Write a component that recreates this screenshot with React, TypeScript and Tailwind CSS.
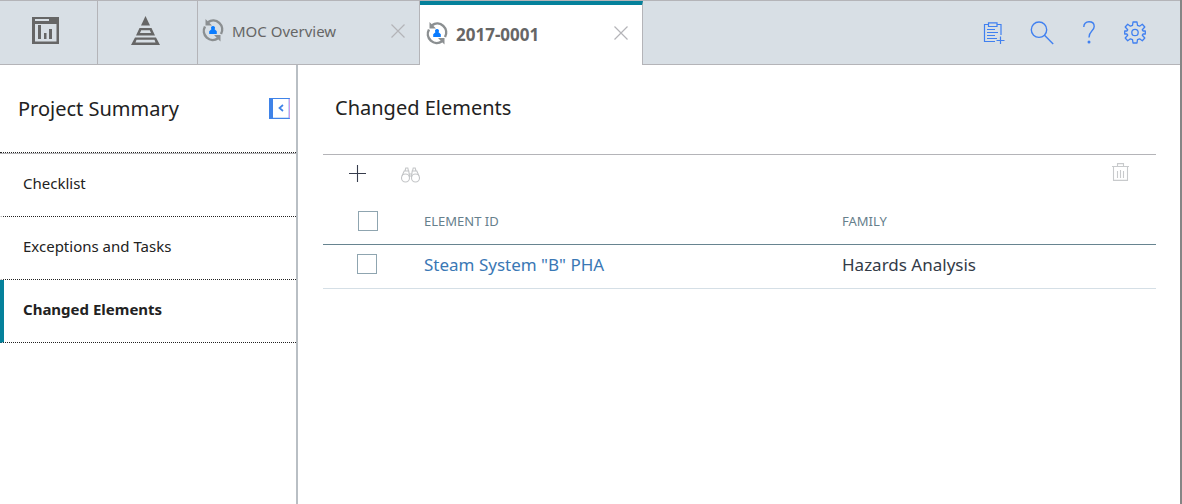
import type { ReactNode } from 'react';

const sections = [
  { label: 'Checklist', active: false },
  { label: 'Exceptions and Tasks', active: false },
  { label: 'Changed Elements', active: true }
];

const elements = [
  { id: 'Steam System "B" PHA', family: 'Hazards Analysis' }
];

function DashboardIcon() {
  return (
    <svg width="27" height="27" viewBox="0 0 27 27" fill="none" aria-hidden="true">
      <path fill="#666" fillRule="evenodd" d="M0 0H27V27H0ZM3 2V4H17V2ZM3 7V24.5H24.5V7Z" />
      <path fill="#666" d="M6 8H9V22H6ZM12 16H14.5V22H12ZM17 12H20V22H17Z" />
    </svg>
  );
}

function PyramidIcon() {
  return (
    <svg width="29" height="29" viewBox="0 0 29 29" aria-hidden="true">
      <path fill="#666" d="M14.5 0L19 9.5H10Z" />
      <path fill="#666" fillRule="evenodd" d="M8.5 12H20.5L24 19.5H5ZM10.2 14.2L9 17H20L18.8 14.2Z" />
      <path fill="#666" fillRule="evenodd" d="M4 21.5H25L29 29H0ZM5.5 23.7L4.5 26.5H24.5L23.5 23.7Z" />
    </svg>
  );
}

function MocIcon() {
  return (
    <svg width="22" height="24" viewBox="0 0 22 24" fill="none" aria-hidden="true">
      <path d="M6 4.2A9 9 0 0 1 19 16M16 20.3A9 9 0 0 1 3 8.5" stroke="#8b8f91" strokeWidth="2.5" />
      <path d="M3.5 1V7.5H10ZM18.5 23.5V17H12Z" fill="#8b8f91" />
      <path d="M11 8A2 2 0 0 1 12.6 11.2L14.8 13.2V16H7.2V13.2L9.4 11.2A2 2 0 0 1 11 8Z" fill="#0a7cff" />
    </svg>
  );
}

function CloseIcon() {
  return (
    <svg width="14" height="14" viewBox="0 0 14 14" fill="none" stroke="currentColor" strokeWidth="1.2" aria-hidden="true">
      <path d="M.5.5L13.5 13.5M13.5.5L.5 13.5" />
    </svg>
  );
}

function ClipboardIcon() {
  return (
    <svg width="22" height="22" viewBox="0 0 22 22" fill="none" stroke="currentColor" strokeWidth="1.2" aria-hidden="true">
      <path d="M5 2.5H1.5V19.5H12M14 2.5H18V13M5.5.8H14V4.5H5.5ZM4 7.5H12M4 10.5H15M4 13.5H12M4 16.5H14M17.5 14.5V22M13.5 18.5H21.5" />
    </svg>
  );
}

function SearchIcon() {
  return (
    <svg width="24" height="24" viewBox="0 0 24 24" fill="none" stroke="currentColor" strokeWidth="1.4" aria-hidden="true">
      <circle cx="9" cy="8.7" r="7.7" />
      <path d="M14.5 14.2L23.2 23" />
    </svg>
  );
}

function HelpIcon() {
  return (
    <svg width="12" height="23" viewBox="0 0 12 23" fill="none" stroke="currentColor" strokeWidth="1.4" aria-hidden="true">
      <path d="M.8 6C.8 2.7 2.7.8 6 .8S11.2 2.7 11.2 5.5C11.2 10 6 9.8 6 16.5" />
      <circle cx="6" cy="21" r="1.5" fill="currentColor" stroke="none" />
    </svg>
  );
}

function GearIcon() {
  return (
    <svg width="22" height="23" viewBox="0 0 22 23" fill="none" stroke="currentColor" strokeWidth="1.3" strokeLinejoin="round" aria-hidden="true">
      <circle cx="11" cy="11.5" r="3.2" />
      <path d="M9 1H13L13.5 4.3L15.6 5.2L18.3 3.3L20.8 6L18.3 8.8L19 10H21.3V13H19L18.3 14.2L20.8 17L18.3 19.7L15.6 17.8L13.5 18.7L13 22H9L8.5 18.7L6.4 17.8L3.7 19.7L1.2 17L3.7 14.2L3 13H.7V10H3L3.7 8.8L1.2 6L3.7 3.3L6.4 5.2L8.5 4.3Z" />
    </svg>
  );
}

function CollapseIcon() {
  return (
    <svg width="21" height="21" viewBox="0 0 21 21" fill="none" aria-hidden="true">
      <path d="M.5.5H20.3V20.3H.5Z" stroke="#3f83e8" strokeWidth="1.2" />
      <path d="M0 0H4V21H0Z" fill="#3f83e8" />
      <path d="M20.5 1V20" stroke="#cf9ae8" />
      <path d="M14 7L10.5 10L14 13" stroke="#3f83e8" strokeWidth="1.7" />
    </svg>
  );
}

function PlusIcon() {
  return (
    <svg width="17" height="17" viewBox="0 0 17 17" stroke="#363c4c" strokeWidth="1.1" aria-hidden="true">
      <path d="M8.5 0V17M0 8.5H17" />
    </svg>
  );
}

function BinocularsIcon() {
  return (
    <svg width="19" height="16" viewBox="0 0 19 16" fill="none" stroke="#c3c5c7" strokeWidth="1.1" aria-hidden="true">
      <circle cx="4.5" cy="11" r="4" />
      <circle cx="14.5" cy="11" r="4" />
      <path d="M1 9L3.2 4H7.8L8.5 10M18 9L15.8 4H11.2L10.5 10M4 4L4.8 1H6.8L7.5 4M15 4L14.2 1H12.2L11.5 4M8 7H11M8.3 9H10.7" />
    </svg>
  );
}

function TrashIcon() {
  return (
    <svg width="17" height="18" viewBox="0 0 17 18" fill="none" stroke="#c8cacc" strokeWidth="1.1" aria-hidden="true">
      <path d="M0 3.5H17M5.5 3V.6H11.5V3M1.5 3V17.4H15.5V3M5.5 8V15M8.5 7V15M11.5 8V15" />
    </svg>
  );
}

function IconButton({ label, className = '', children }: { label: string; className?: string; children: ReactNode }) {
  return (
    <button type="button" aria-label={label} className={`flex items-center justify-center ${className}`}>
      {children}
    </button>
  );
}

export default function App() {
  return (
    <div className="flex min-h-screen flex-col border-r-2 border-[#858585] bg-white font-['Noto_Sans',sans-serif] text-[#222]">
      {/* Tab bar */}
      <header className="flex h-[65px] border-t border-[#b4b4b8] bg-[#d8dfe5]">
        <IconButton label="Dashboard" className="w-[98px] border-r border-b border-[#b4b4b8] pb-1 pr-1.5">
          <DashboardIcon />
        </IconButton>
        <IconButton label="Hierarchy" className="w-[100px] border-r border-b border-[#b4b4b8] pb-1 pr-1">
          <PyramidIcon />
        </IconButton>
        <div className="flex w-[222px] items-center border-r border-b border-[#b4b4b8] pb-1 pl-1">
          <button type="button" className="flex flex-1 items-start gap-2 text-[15px] text-[#666]">
            <MocIcon />
            <span className="pt-0.5">MOC Overview</span>
          </button>
          <IconButton label="Close MOC Overview" className="px-3.5 text-[#b4b4b8]">
            <CloseIcon />
          </IconButton>
        </div>
        <div className="flex w-[223px] items-center border-t-4 border-r border-r-[#b4b4b8] border-t-[#05819b] bg-white pb-1 pl-1.5">
          <button type="button" className="flex flex-1 items-center gap-2 text-[17px] leading-6 font-bold text-[#666]">
            <MocIcon />
            <span className="pt-1">2017-0001</span>
          </button>
          <IconButton label="Close 2017-0001" className="pl-3 pr-3.5 text-[#b4b4b8]">
            <CloseIcon />
          </IconButton>
        </div>
        <nav className="flex flex-1 items-center justify-end gap-[25px] border-b border-[#b4b4b8] pr-[34px] text-[#4080f0]">
          <IconButton label="Add task"><ClipboardIcon /></IconButton>
          <IconButton label="Search"><SearchIcon /></IconButton>
          <IconButton label="Help" className="px-1"><HelpIcon /></IconButton>
          <IconButton label="Settings"><GearIcon /></IconButton>
        </nav>
      </header>

      <div className="flex flex-1">
        {/* Project sections */}
        <aside className="w-[298px] shrink-0 border-r-2 border-[#b9bfc4]">
          <div className="flex h-[88px] items-center justify-between border-b border-dotted border-[#222] pl-[18px] pr-1.5">
            <h2 className="text-[20px]">Project Summary</h2>
            <IconButton label="Collapse panel"><CollapseIcon /></IconButton>
          </div>
          <nav className="border-t border-[#b4b4b8]">
            {sections.map((section) => (
              <a
                key={section.label}
                href="#"
                className={`flex h-[63px] items-center border-b border-l-4 border-b-[#222] pb-1 pl-[19px] text-[15px] [border-bottom-style:dotted] ${section.active ? 'border-l-[#05819b] font-bold' : 'border-l-transparent'}`}
              >
                {section.label}
              </a>
            ))}
          </nav>
        </aside>

        <main className="min-w-0 flex-1 pl-[25px] pr-6">
          <h1 className="flex h-[89px] items-center pb-1 pl-3 text-[20px]">Changed Elements</h1>
          <div className="flex h-[45px] items-start justify-between border-t border-[#b4b4b8] pt-2 pl-[26px] pr-[27px]">
            <div className="flex gap-[35px]">
              <IconButton label="Add element"><PlusIcon /></IconButton>
              <IconButton label="Find element" className="pt-1"><BinocularsIcon /></IconButton>
            </div>
            <IconButton label="Delete element"><TrashIcon /></IconButton>
          </div>
          <table className="w-full table-fixed text-left">
            <thead>
              <tr className="h-[45px] border-b border-[#678490] text-[13px] text-[#66808c]">
                <th className="w-[101px] pl-[35px]">
                  <input type="checkbox" aria-label="Select all" className="block size-5 appearance-none border border-[#8fa5b0] bg-white" />
                </th>
                <th className="w-[418px] font-normal">ELEMENT ID</th>
                <th className="font-normal">FAMILY</th>
              </tr>
            </thead>
            <tbody>
              {elements.map((element) => (
                <tr key={element.id} className="h-11 border-b border-[#d5dfe6] text-[17px]">
                  <td className="pb-1 pl-[34px]">
                    <input type="checkbox" aria-label={`Select ${element.id}`} className="block size-5 appearance-none border border-[#8fa5b0] bg-white" />
                  </td>
                  <td className="pb-0.5"><a href="#" className="text-[#3a78b5]">{element.id}</a></td>
                  <td className="pb-0.5 text-[#333b47]">{element.family}</td>
                </tr>
              ))}
            </tbody>
          </table>
        </main>
      </div>
    </div>
  );
}
